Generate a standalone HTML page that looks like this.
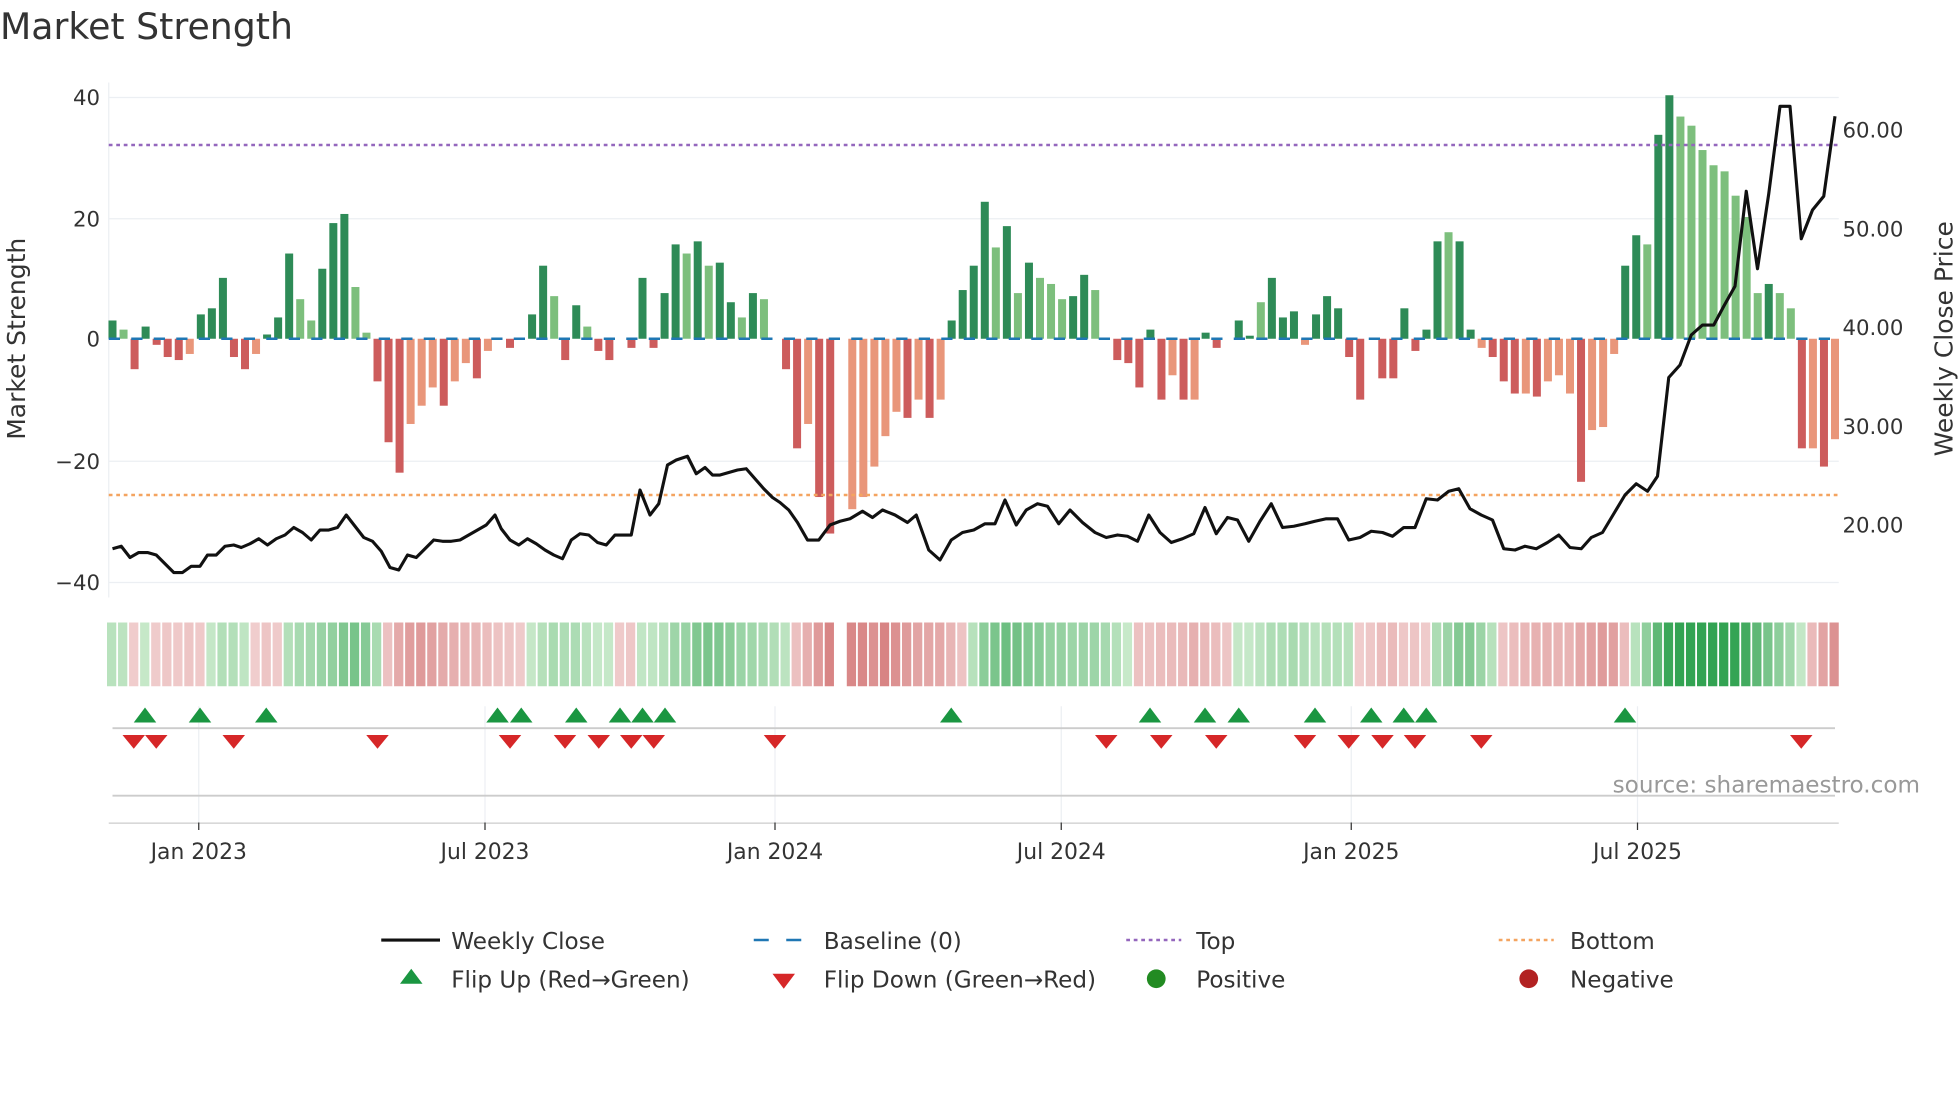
<!DOCTYPE html>
<html><head><meta charset="utf-8"><style>
html,body{margin:0;padding:0;background:#fff;}
svg{display:block;font-family:"DejaVu Sans","Liberation Sans",sans-serif;}
</style></head><body>
<svg id="s" width="1960" height="1102" viewBox="0 0 1568 881.6" xmlns="http://www.w3.org/2000/svg">
<text x="0" y="31" font-size="29" fill="#333">Market Strength</text>
<g stroke="#eceff3" stroke-width="1">
<line x1="87" x2="1471" y1="78" y2="78"/><line x1="87" x2="1471" y1="175" y2="175"/>
<line x1="87" x2="1471" y1="369" y2="369"/><line x1="87" x2="1471" y1="466" y2="466"/>
<line x1="87" x2="87" y1="66" y2="478"/>
</g>
<g font-size="17" fill="#333" text-anchor="end">
<text x="80" y="84">40</text><text x="80" y="181">20</text><text x="80" y="277">0</text>
<text x="80" y="375">−20</text><text x="80" y="472">−40</text>
</g>
<g font-size="17" fill="#333">
<text x="1474" y="110">60.00</text><text x="1474" y="189">50.00</text><text x="1474" y="268">40.00</text>
<text x="1474" y="347">30.00</text><text x="1474" y="426">20.00</text>
</g>
<text transform="translate(20,271) rotate(-90)" font-size="20" fill="#333" text-anchor="middle">Market Strength</text>
<text transform="translate(1562,271) rotate(-90)" font-size="20" fill="#333" text-anchor="middle">Weekly Close Price</text>
<g id="bars"></g>
<line x1="87" x2="1471" y1="271" y2="271" stroke="#1f77b4" stroke-width="2" stroke-dasharray="9,9"/>
<line x1="87" x2="1471" y1="116" y2="116" stroke="#9467bd" stroke-width="2" stroke-dasharray="3,3"/>
<line x1="87" x2="1471" y1="396" y2="396" stroke="#f4a460" stroke-width="2" stroke-dasharray="3,3"/>
<polyline id="price" fill="none" stroke="#111" stroke-width="2.5" stroke-linejoin="round"/>
<g id="strip"></g>
<g stroke="#eceff3" stroke-width="1">
<line x1="159" x2="159" y1="565" y2="658"/><line x1="388" x2="388" y1="565" y2="658"/>
<line x1="620" x2="620" y1="565" y2="658"/><line x1="849" x2="849" y1="565" y2="658"/>
<line x1="1081" x2="1081" y1="565" y2="658"/><line x1="1310" x2="1310" y1="565" y2="658"/>
</g>
<line x1="90" x2="1468" y1="582.5" y2="582.5" stroke="#ccc" stroke-width="1.5"/>
<line x1="90" x2="1468" y1="636.5" y2="636.5" stroke="#ccc" stroke-width="1.5"/>
<line x1="87" x2="1471" y1="658.5" y2="658.5" stroke="#ccc" stroke-width="1"/>
<g id="tri"></g>
<text x="1536" y="634" font-size="18.5" fill="#999" text-anchor="end">source: sharemaestro.com</text>
<g stroke="#333" stroke-width="1"><line x1="159" x2="159" y1="658" y2="664"/><line x1="388" x2="388" y1="658" y2="664"/><line x1="620" x2="620" y1="658" y2="664"/><line x1="849" x2="849" y1="658" y2="664"/><line x1="1081" x2="1081" y1="658" y2="664"/><line x1="1310" x2="1310" y1="658" y2="664"/></g>
<g font-size="17.5" fill="#333" text-anchor="middle">
<text x="159" y="687">Jan 2023</text><text x="388" y="687">Jul 2023</text><text x="620" y="687">Jan 2024</text>
<text x="849" y="687">Jul 2024</text><text x="1081" y="687">Jan 2025</text><text x="1310" y="687">Jul 2025</text>
</g>
<g font-size="18.5" fill="#333">
<line x1="305" x2="352" y1="752" y2="752" stroke="#111" stroke-width="2.5"/><text x="361" y="759">Weekly Close</text>
<line x1="603" x2="647" y1="752" y2="752" stroke="#1f77b4" stroke-width="2" stroke-dasharray="12,14"/><text x="659" y="759">Baseline (0)</text>
<line x1="901" x2="945" y1="752" y2="752" stroke="#9467bd" stroke-width="2" stroke-dasharray="3,3"/><text x="957" y="759">Top</text>
<line x1="1199" x2="1243" y1="752" y2="752" stroke="#f4a460" stroke-width="2" stroke-dasharray="3,3"/><text x="1256" y="759">Bottom</text>
<polygon points="329,775 338,787 320,787" fill="#1a9641"/><text x="361" y="790">Flip Up (Red→Green)</text>
<polygon points="618,779 636,779 627,791" fill="#d62728"/><text x="659" y="790">Flip Down (Green→Red)</text>
<circle cx="925" cy="783" r="7.5" fill="#228b22"/><text x="957" y="790">Positive</text>
<circle cx="1223" cy="783" r="7.5" fill="#b22222"/><text x="1256" y="790">Negative</text>
</g>
</svg>
<script>
var v=[3,1.5,-5,2,-1,-3,-3.5,-2.5,4,5,10,-3,-5,-2.5,0.7,3.5,14,6.5,3,11.5,19,20.5,8.5,1,-7,-17,-22,-14,-11,-8,-11,-7,-4,-6.5,-2,0,-1.5,0,4,12,7,-3.5,5.5,2,-2,-3.5,0,-1.5,10,-1.5,7.5,15.5,14,16,12,12.5,6,3.5,7.5,6.5,0,-5,-18,-14,-26,-32,0,-28,-26,-21,-16,-12,-13,-10,-13,-10,3,8,12,22.5,15,18.5,7.5,12.5,10,9,6.5,7,10.5,8,0,-3.5,-4,-8,1.5,-10,-6,-10,-10,1,-1.5,0,3,0.5,6,10,3.5,4.5,-1,4,7,5,-3,-10,0,-6.5,-6.5,5,-2,1.5,16,17.5,16,1.5,-1.5,-3,-7,-9,-9,-9.5,-7,-6,-9,-23.5,-15,-14.5,-2.5,12,17,15.5,33.5,40,36.5,35,31,28.5,27.5,23.5,20,7.5,9,7.5,5,-18,-18,-21,-16.5];
var light={};[1,7,13,17,18,22,23,27,28,29,31,32,34,40,43,52,54,57,59,63,67,68,69,70,71,73,75,80,82,84,85,86,89,96,98,101,104,108,121,124,128,130,131,132,134,135,136,139,142,143,144,145,146,147,148,149,151,152,154,156].forEach(function(i){light[i]=1});
var ns="http://www.w3.org/2000/svg",b=document.getElementById('bars'),st=document.getElementById('strip');
function r(g,x,y,w,h,f){var e=document.createElementNS(ns,'rect');e.setAttribute('x',x);e.setAttribute('y',y);e.setAttribute('width',w);e.setAttribute('height',h);e.setAttribute('fill',f);g.appendChild(e);}
var step=(1468-90)/(v.length-1);
for(var i=0;i<v.length;i++){var x=90+i*step,val=v[i];
 if(val!=0){var h=Math.abs(val)*4.87,y=val>0?271-h:271;
 var c=val>0?(light[i]?'#7dbf7d':'#2e8b57'):(light[i]?'#e9967a':'#cd5c5c');r(b,x-3.2,y,6.4,h,c);}
 var s=0,n=0;for(var k=Math.max(0,i-3);k<=i;k++){s+=v[k];n++;}s/=n;
 if(i==66)continue;
 var t=Math.min(1,Math.abs(s)/28),col;
 if(s>=0){col='rgb('+Math.round(200-t*150)+','+Math.round(233-t*70)+','+Math.round(202-t*120)+')';}
 else{col='rgb('+Math.round(240-t*30)+','+Math.round(205-t*90)+','+Math.round(205-t*90)+')';}
 r(st,x-4.4,498,7.4,51,col);}
var p="90,439 97,437 104,446 111,442 118,442 125,444 132,451 139,458 146,458 153,453 160,453 166,444 173,444 180,437 187,436 193,438 200,435 207,431 214,436 221,431 228,428 235,422 242,426 249,432 256,424 263,424 270,422 277,412 284,421 291,430 298,433 305,441 312,454 319,456 326,444 333,446 340,439 347,432 354,433 361,433 368,432 375,428 382,424 389,420 396,412 401,423 408,432 415,436 422,431 429,435 436,440 443,444 450,447 457,432 464,427 471,428 478,434 485,436 492,428 499,428 505,428 512,392 520,412 527,403 534,372 541,368 550,365 557,379 564,374 570,380 576,380 583,378 590,376 597,375 604,383 611,391 618,398 624,402 631,408 638,418 646,432 655,432 664,420 672,417 680,415 690,409 698,414 706,408 716,412 726,418 733,412 743,440 752,448 761,432 770,426 779,424 788,419 796,419 804,400 813,420 821,408 830,403 838,405 847,419 856,408 866,418 876,426 885,430 894,428 902,429 910,433 919,412 928,426 937,434 946,431 955,427 964,406 973,427 982,414 990,416 999,433 1008,417 1017,403 1026,422 1035,421 1044,419 1052,417 1061,415 1070,415 1079,432 1088,430 1097,425 1106,426 1114,429 1123,422 1132,422 1141,399 1150,400 1159,393 1167,391 1176,407 1185,412 1194,416 1203,439 1212,440 1220,437 1229,439 1238,434 1247,428 1256,438 1265,439 1273,430 1282,426 1291,411 1300,396 1309,387 1318,393 1326,381 1335,302 1344,292 1353,268 1362,260 1371,260 1379,245 1388,229 1397,153 1406,215 1415,155 1424,85 1432,85 1441,191 1450,168 1459,157 1468,93";
document.getElementById('price').setAttribute('points',p);
var tg=document.getElementById('tri');
[116,160,213,398,417,461,496,514,532,761,920,964,991,1052,1097,1123,1141,1300].forEach(function(x){var e=document.createElementNS(ns,'polygon');e.setAttribute('points',x+',566 '+(x+9)+',578 '+(x-9)+',578');e.setAttribute('fill','#1a9641');tg.appendChild(e);});
[107,125,187,302,408,452,479,505,523,620,885,929,973,1044,1079,1106,1132,1185,1441].forEach(function(x){var e=document.createElementNS(ns,'polygon');e.setAttribute('points',(x-9)+',588 '+(x+9)+',588 '+x+',599');e.setAttribute('fill','#d62728');tg.appendChild(e);});
</script>
</body></html>
